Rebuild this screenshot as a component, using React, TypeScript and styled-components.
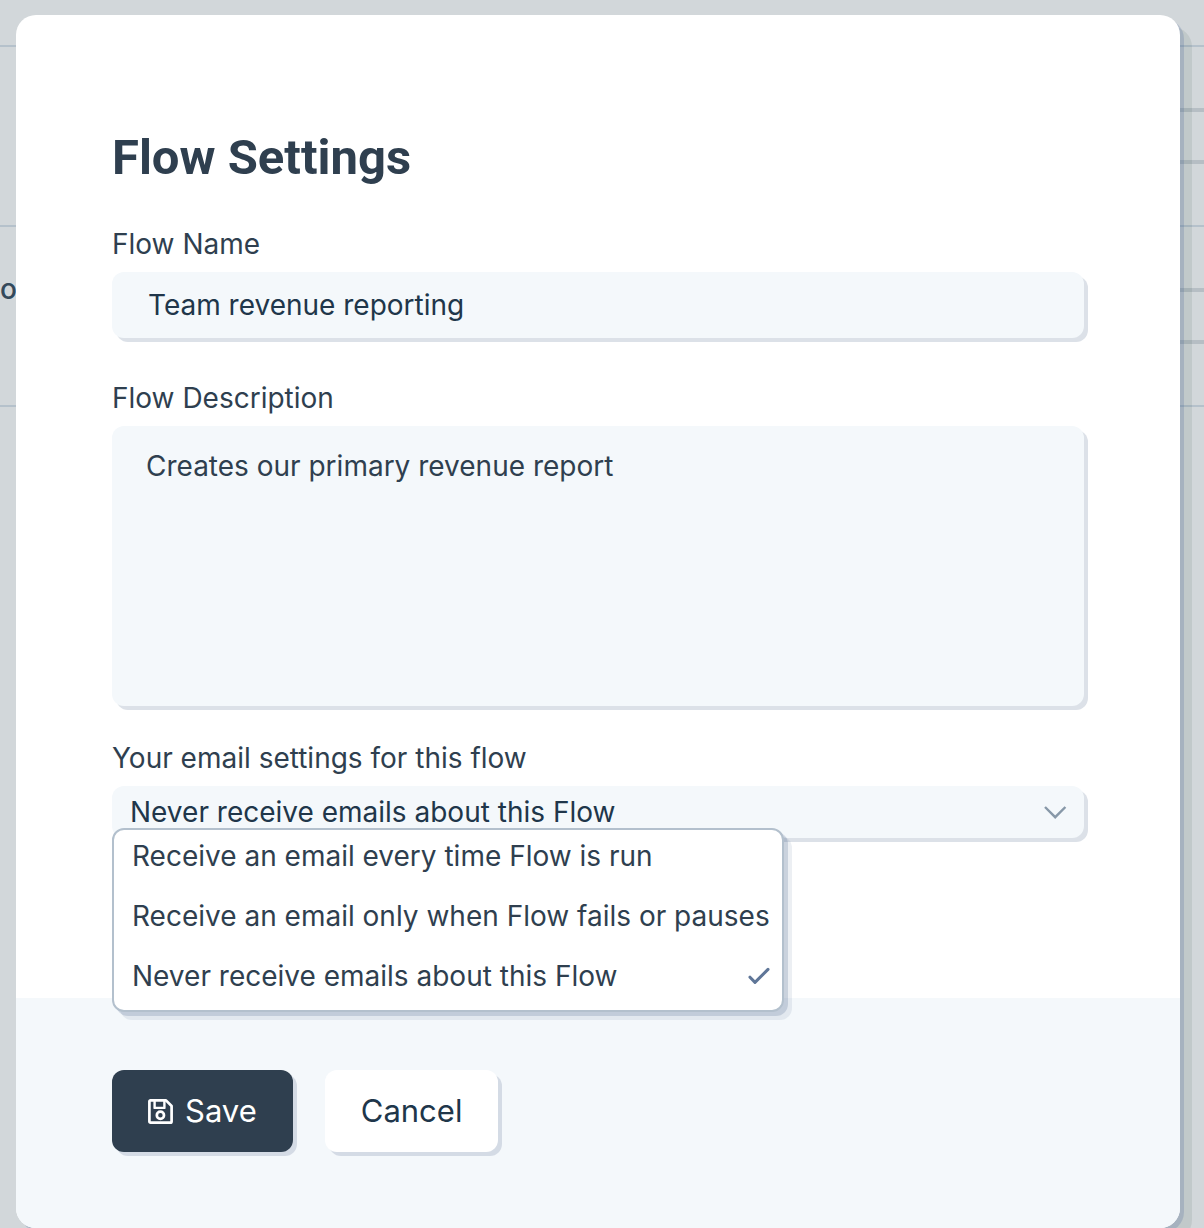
import React, { useState } from "react";
import styled, { createGlobalStyle, css } from "styled-components";

const ink = "#2f3f4f";
const inkDeep = "#20364a";
const fieldBg = "#f4f8fb";

const GlobalStyle = createGlobalStyle`
  *, *::before, *::after { box-sizing: border-box; }
  body {
    margin: 0;
    background: #d2d7da;
    color: ${ink};
    font-family: Inter, "Liberation Sans", sans-serif;
    font-size: 28px;
    font-weight: 400;
    line-height: 36px;
  }
  button, input, textarea, select { font: inherit; color: inherit; }
`;

const Stage = styled.div`
  display: grid;
  grid-template-columns: minmax(0, 1fr);
  min-height: 100vh;
  overflow: hidden;
`;

const Backdrop = styled.div`
  grid-area: 1 / 1;
  padding-top: 45px;
`;

const BackdropRow = styled.div`
  display: flex;
  justify-content: space-between;
  height: 180px;
  border-top: 2px solid #b5c1cb;
`;

const BackdropText = styled.span`
  padding-top: 44px;
  font-weight: 500;
  color: #34495b;
`;

const BackdropAction = styled.span`
  width: 60px;
  height: 56px;
  margin-top: 61px;
  border: solid #b6bec4;
  border-width: 4px 0;
`;

const Modal = styled.section`
  grid-area: 1 / 1;
  align-self: start;
  z-index: 1;
  margin: 15px 24px 0 16px;
  border-radius: 20px;
  background: #fff;
  box-shadow: 4px 4px 0 rgba(60, 90, 150, 0.2), 12px 12px 0 rgba(0, 40, 30, 0.08);
`;

const Body = styled.div`
  padding: 112px 96px 160px;
`;

const Title = styled.h1`
  margin: 0 0 38px;
  font-family: Roboto, Inter, sans-serif;
  font-size: 49px;
  line-height: 61px;
  font-weight: 700;
`;

const Field = styled.div<{ $gap?: number }>`
  position: relative;
  display: flex;
  flex-direction: column;
  gap: 10px;
  margin-bottom: ${(p) => p.$gap ?? 0}px;
`;

const control = css`
  display: block;
  width: 100%;
  border: 0;
  border-radius: 12px;
  background: ${fieldBg};
  box-shadow: 4px 4px 0 #dce1e8;
  outline: none;
`;

const TextInput = styled.input`
  ${control}
  height: 66px;
  padding: 0 36px;
  color: ${inkDeep};
`;

const TextArea = styled.textarea`
  ${control}
  height: 280px;
  padding: 22px 34px;
  resize: none;
`;

const SelectBox = styled.div`
  display: grid;
  align-items: center;
`;

const Select = styled.select`
  ${control}
  grid-area: 1 / 1;
  height: 52px;
  padding: 0 56px 0 18px;
  appearance: none;
  color: ${inkDeep};
`;

const Chevron = styled.svg`
  grid-area: 1 / 1;
  justify-self: end;
  margin-right: 16px;
  pointer-events: none;
`;

const Menu = styled.div`
  position: absolute;
  top: 88px;
  left: 0;
  display: flex;
  flex-direction: column;
  height: 184px;
  border: 2px solid #b3c0cd;
  border-radius: 12px;
  background: #fff;
  box-shadow: 4px 4px 0 rgba(70, 95, 135, 0.2), 8px 8px 0 rgba(70, 95, 135, 0.1);
`;

const Option = styled.button`
  display: flex;
  align-items: center;
  justify-content: space-between;
  height: 60px;
  padding: 0 12px 8px 18px;
  border: 0;
  background: none;
  white-space: nowrap;
  text-align: left;
`;

const Footer = styled.footer`
  display: flex;
  gap: 32px;
  padding: 72px 96px 76px;
  border-radius: 0 0 20px 20px;
  background: ${fieldBg};
`;

const Button = styled.button<{ $primary?: boolean }>`
  display: flex;
  align-items: center;
  gap: 12px;
  height: 82px;
  padding: 0 36px;
  border: 0;
  border-radius: 12px;
  background: ${(p) => (p.$primary ? ink : "#fff")};
  color: ${(p) => (p.$primary ? "#fff" : inkDeep)};
  box-shadow: 4px 4px 0 #d4dbe5;
  font-size: 31px;
`;

const SaveIcon = () => (
  <svg width="25" height="25" viewBox="0 0 25 25" fill="none" stroke="currentColor" strokeWidth="2.7" strokeLinejoin="round" aria-hidden="true">
    <path d="M2.4 1.4H18L23.6 7V22.4q0 1.2-1.2 1.2H2.6q-1.2 0-1.2-1.2V2.6q0-1.2 1.2-1.2Z" />
    <path d="M6.6 1.4V8.9H16.4V1.4" strokeWidth="2.4" />
    <circle cx="12.4" cy="16.2" r="3.6" />
  </svg>
);

const CheckIcon = () => (
  <svg width="22" height="18" viewBox="0 0 22 18" fill="none" stroke="#5f7698" strokeWidth="3" strokeLinecap="round" strokeLinejoin="round" aria-hidden="true">
    <path d="M2 10.2 7 15.4 20 2.4" />
  </svg>
);

const options = [
  "Receive an email every time Flow is run",
  "Receive an email only when Flow fails or pauses",
  "Never receive emails about this Flow",
];

export default function App() {
  const [name, setName] = useState("Team revenue reporting");
  const [description, setDescription] = useState("Creates our primary revenue report");
  const [selected, setSelected] = useState(options[2]);
  const [open, setOpen] = useState(true);

  return (
    <>
      <GlobalStyle />
      <Stage>
        <Backdrop aria-hidden="true">
          <BackdropRow>
            <span />
            <BackdropAction />
          </BackdropRow>
          <BackdropRow>
            <BackdropText>o</BackdropText>
            <BackdropAction />
          </BackdropRow>
          <BackdropRow />
        </Backdrop>

        <Modal role="dialog" aria-labelledby="title">
          <Body>
            <Title id="title">Flow Settings</Title>
            <Field $gap={42}>
              <label htmlFor="name">Flow Name</label>
              <TextInput id="name" value={name} onChange={(e) => setName(e.target.value)} />
            </Field>
            <Field $gap={34}>
              <label htmlFor="description">Flow Description</label>
              <TextArea id="description" value={description} onChange={(e) => setDescription(e.target.value)} />
            </Field>
            <Field>
              <label htmlFor="email">Your email settings for this flow</label>
              <SelectBox>
                <Select
                  id="email"
                  value={selected}
                  onChange={(e) => setSelected(e.target.value)}
                  onMouseDown={(e) => {
                    e.preventDefault();
                    setOpen(!open);
                  }}
                >
                  {options.map((o) => (
                    <option key={o}>{o}</option>
                  ))}
                </Select>
                <Chevron width="26" height="16" viewBox="0 0 26 16" fill="none" stroke="#8798a8" strokeWidth="2.4" aria-hidden="true">
                  <path d="M3 3 13.2 13.2 23.4 3" />
                </Chevron>
              </SelectBox>
              {open && (
                <Menu role="listbox" aria-label="Email settings">
                  {options.map((o) => (
                    <Option
                      key={o}
                      type="button"
                      role="option"
                      aria-selected={o === selected}
                      onClick={() => {
                        setSelected(o);
                        setOpen(false);
                      }}
                    >
                      {o}
                      {o === selected && <CheckIcon />}
                    </Option>
                  ))}
                </Menu>
              )}
            </Field>
          </Body>
          <Footer>
            <Button type="button" $primary>
              <SaveIcon />
              Save
            </Button>
            <Button type="button">Cancel</Button>
          </Footer>
        </Modal>
      </Stage>
    </>
  );
}
